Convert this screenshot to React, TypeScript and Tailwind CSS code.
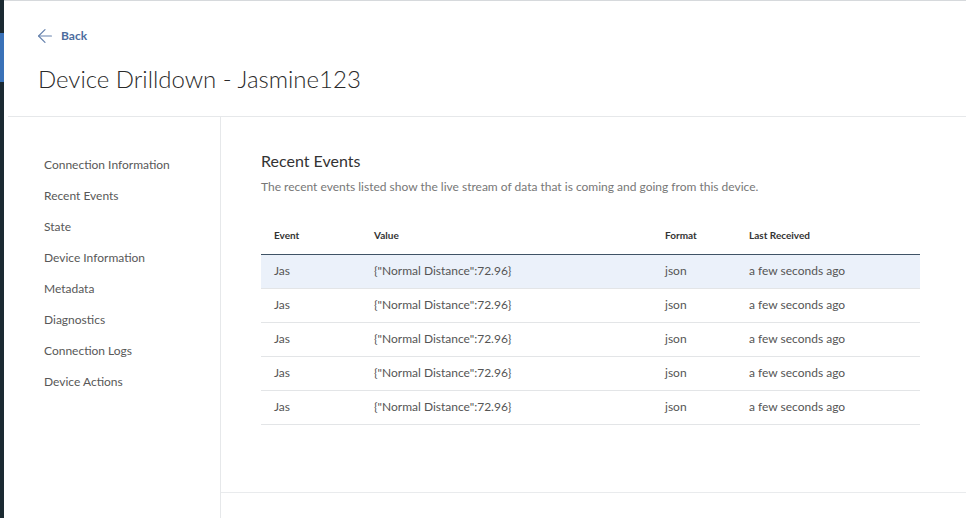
import { ArrowLeft } from "lucide-react";

const NAV_ITEMS = [
  "Connection Information",
  "Recent Events",
  "State",
  "Device Information",
  "Metadata",
  "Diagnostics",
  "Connection Logs",
  "Device Actions",
];

const EVENTS = Array.from({ length: 5 }, () => ({
  event: "Jas",
  value: '{"Normal Distance":72.96}',
  format: "json",
  received: "a few seconds ago",
}));

export default function App() {
  return (
    <div
      className="flex h-[518px] w-[966px] overflow-hidden bg-white text-[#555]"
      style={{ fontFamily: "Lato, 'Open Sans', sans-serif" }}
    >
      {/* dark app rail */}
      <div className="flex w-[4px] flex-col bg-[#1b2a32]">
        <div className="h-[33px]" />
        <div className="h-[49px] bg-[#3a72b8]" />
        <div className="flex-1" />
      </div>

      <div className="flex flex-1 flex-col border-t border-[#d6d9dc]">
        {/* page header */}
        <div className="ml-[4px] h-[116px] border-b border-[#e6e8ea] pl-[30px] pt-[27px]">
          <button className="-ml-[4px] flex h-[16px] items-center gap-[5px] text-[12px] font-bold text-[#4d6d9e]">
            <ArrowLeft size={22} strokeWidth={1.3} className="text-[#6682ad]" />
            Back
          </button>
          <h1 className="mt-[19px] text-[24px] leading-[32px] font-light text-[#2a2a2a]">
            Device Drilldown - Jasmine123
          </h1>
        </div>

        <div className="flex flex-1">
          {/* section nav */}
          <nav className="w-[217px] border-r border-[#e6e8ea] pl-[40px] pt-[32px]">
            {NAV_ITEMS.map((item) => (
              <div key={item} className="h-[31px] text-[12px] leading-[31px] text-[#585858]">
                {item}
              </div>
            ))}
          </nav>

          {/* content */}
          <div className="flex flex-1 flex-col">
            <div className="h-[376px] border-b border-[#e9ebed] pl-[40px] pt-[32px]">
              <h2 className="text-[16px] leading-[24px] text-[#333]">Recent Events</h2>
              <p className="mt-[5px] text-[12px] leading-[18px] text-[#777]">
                The recent events listed show the live stream of data that is coming and going from this device.
              </p>

              <table className="mt-[21px] w-[659px] table-fixed border-collapse text-left">
                <thead>
                  <tr className="h-[37px] border-b-[1.5px] border-[#3f5366]">
                    <th className="w-[113px] pl-[13px] text-[10px] font-bold text-[#333]">Event</th>
                    <th className="w-[291px] text-[10px] font-bold text-[#333]">Value</th>
                    <th className="w-[84px] text-[10px] font-bold text-[#333]">Format</th>
                    <th className="text-[10px] font-bold text-[#333]">Last Received</th>
                  </tr>
                </thead>
                <tbody>
                  {EVENTS.map((e, i) => (
                    <tr
                      key={i}
                      className={`h-[34px] border-b border-[#e3e5e7] text-[12px] text-[#555] ${
                        i === 0 ? "bg-[#ebf1fa]" : ""
                      }`}
                    >
                      <td className="pl-[13px]">{e.event}</td>
                      <td>{e.value}</td>
                      <td>{e.format}</td>
                      <td>{e.received}</td>
                    </tr>
                  ))}
                </tbody>
              </table>
            </div>
            <div className="flex-1" />
          </div>
        </div>
      </div>
    </div>
  );
}
